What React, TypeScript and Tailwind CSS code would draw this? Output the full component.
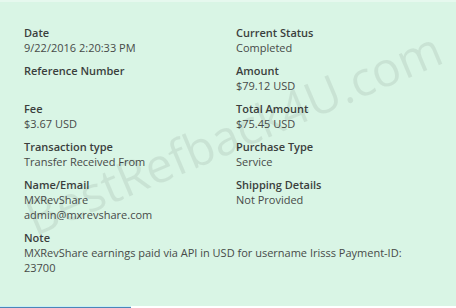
import React from 'react';

interface Field {
  label: string;
  lines: string[];
}

const rows: [Field, Field][] = [
  [
    { label: 'Date', lines: ['9/22/2016 2:20:33 PM'] },
    { label: 'Current Status', lines: ['Completed'] },
  ],
  [
    { label: 'Reference Number', lines: [] },
    { label: 'Amount', lines: ['$79.12 USD'] },
  ],
  [
    { label: 'Fee', lines: ['$3.67 USD'] },
    { label: 'Total Amount', lines: ['$75.45 USD'] },
  ],
  [
    { label: 'Transaction type', lines: ['Transfer Received From'] },
    { label: 'Purchase Type', lines: ['Service'] },
  ],
  [
    { label: 'Name/Email', lines: ['MXRevShare', 'admin@mxrevshare.com'] },
    { label: 'Shipping Details', lines: ['Not Provided'] },
  ],
];

function FieldBlock({ field }: { field: Field }) {
  return (
    <div className="flex flex-col">
      <div className="font-semibold text-[#3b3f3d]">{field.label}</div>
      {field.lines.map((line) => (
        <div key={line} className="text-[#474a48]">
          {line}
        </div>
      ))}
    </div>
  );
}

export default function App() {
  return (
    <div className="relative h-[308px] w-[456px] overflow-hidden bg-white">
      <div className="relative h-[306px] border-t-2 border-[#e6f8ee] bg-[#d9f5e5] pl-6 pr-[26px] pt-[23px] font-['Open_Sans',sans-serif] text-[11px] leading-[15px]">
        <div className="flex flex-col gap-2">
          {rows.map(([left, right]) => (
            <div key={left.label} className="grid grid-cols-[212px_1fr]">
              <FieldBlock field={left} />
              <FieldBlock field={right} />
            </div>
          ))}
          <div className="flex flex-col">
            <div className="font-semibold text-[#3b3f3d]">Note</div>
            <div className="text-[#474a48]">
              MXRevShare earnings paid via API in USD for username Irisss Payment-ID: 23700
            </div>
          </div>
        </div>
        <div className="pointer-events-none absolute left-[28px] top-[194px] origin-left -rotate-[23deg] select-none whitespace-nowrap font-['Open_Sans',sans-serif] text-[48px] leading-none text-black/[0.07]">
          BestRefback4U.com
        </div>
      </div>
      <div className="h-px w-[131px] bg-[#c8f0f4]" />
      <div className="h-px w-[131px] bg-[#4a86b8]" />
    </div>
  );
}
